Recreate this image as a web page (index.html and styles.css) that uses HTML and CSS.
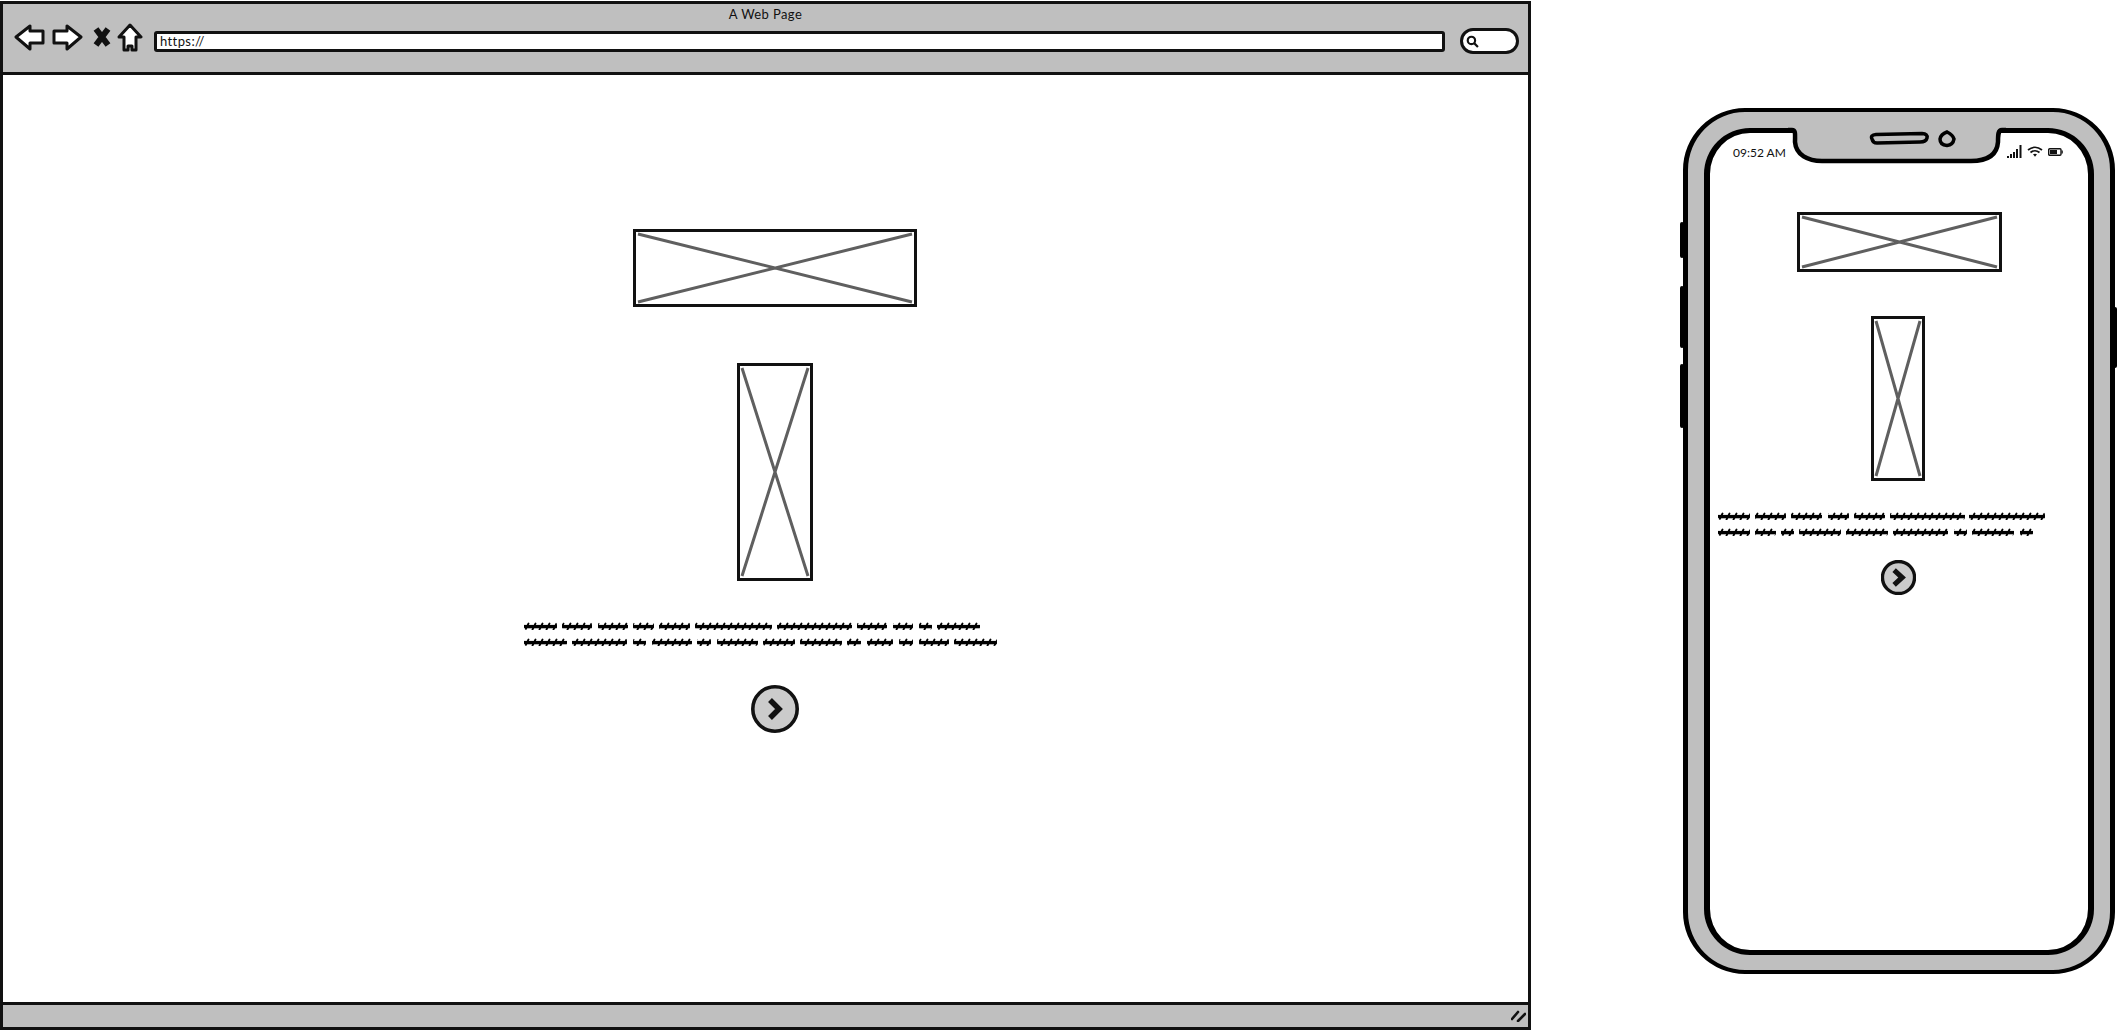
FILE: index.html
```html
<!DOCTYPE html>
<html lang="en">
<head>
    <meta charset="UTF-8">
    <title>A Web Page</title>
    <link rel="stylesheet" href="styles.css">
</head>
<body>

    <div class="browser">
        <header class="topbar">
            <div class="title">A Web Page</div>
            <div class="toolbar">
                <svg class="icon icon-back" viewBox="0 0 31 28"><path d="M2 14 L16 3 V8 H29 V20 H16 V26 Z"/></svg>
                <svg class="icon icon-forward" viewBox="0 0 32 28"><path d="M30 14 L16 3 V8 H3 V20 H16 V26 Z"/></svg>
                <svg class="icon icon-close" viewBox="0 0 20 22"><path d="M4 3 L16 19 M16 3 L4 19"/></svg>
                <svg class="icon icon-home" viewBox="0 0 26 29"><path d="M13 2 L24 14 H19 V27 H15 V23 H11 V27 H7 V14 H2 Z"/></svg>
                <div class="address">https://</div>
                <div class="search">
                    <svg class="search-glass" viewBox="0 0 12 12"><circle cx="5" cy="5" r="3.4"/><path d="M7.5 7.5 L11 11"/></svg>
                </div>
            </div>
        </header>

        <main class="page">
            <div class="placeholder wide">
                <svg viewBox="0 0 278 72"><path d="M2 2 L276 70 M276 2 L2 70"/></svg>
            </div>
            <div class="placeholder tall">
                <svg viewBox="0 0 70 212"><path d="M2 2 L68 210 M68 2 L2 210"/></svg>
            </div>
            <svg class="squiggle squiggle-wide" viewBox="0 0 502 24">
                <defs>
                    <pattern id="scribble" width="7" height="8" patternUnits="userSpaceOnUse">
                        <path class="scribble-line" d="M0 4.6 H7"/>
                        <path class="scribble-tick" d="M1.5 7.5 L4.5 1.5"/>
                    </pattern>
                </defs>
                <g fill="url(#scribble)">
                    <rect x="0" y="0" width="33" height="8" rx="3"/>
                    <rect x="38" y="0" width="30" height="8" rx="3"/>
                    <rect x="74" y="0" width="30" height="8" rx="3"/>
                    <rect x="109" y="0" width="21" height="8" rx="3"/>
                    <rect x="135" y="0" width="31" height="8" rx="3"/>
                    <rect x="171" y="0" width="77" height="8" rx="3"/>
                    <rect x="253" y="0" width="75" height="8" rx="3"/>
                    <rect x="333" y="0" width="30" height="8" rx="3"/>
                    <rect x="369" y="0" width="20" height="8" rx="3"/>
                    <rect x="395" y="0" width="13" height="8" rx="3"/>
                    <rect x="413" y="0" width="43" height="8" rx="3"/>
                    <rect x="0" y="16" width="43" height="8" rx="3"/>
                    <rect x="48" y="16" width="55" height="8" rx="3"/>
                    <rect x="109" y="16" width="13" height="8" rx="3"/>
                    <rect x="128" y="16" width="40" height="8" rx="3"/>
                    <rect x="173" y="16" width="14" height="8" rx="3"/>
                    <rect x="193" y="16" width="41" height="8" rx="3"/>
                    <rect x="239" y="16" width="32" height="8" rx="3"/>
                    <rect x="276" y="16" width="42" height="8" rx="3"/>
                    <rect x="323" y="16" width="14" height="8" rx="3"/>
                    <rect x="343" y="16" width="26" height="8" rx="3"/>
                    <rect x="375" y="16" width="14" height="8" rx="3"/>
                    <rect x="395" y="16" width="30" height="8" rx="3"/>
                    <rect x="430" y="16" width="43" height="8" rx="3"/>
                </g>
            </svg>
            <svg class="next next-wide" viewBox="0 0 48 48">
                <circle cx="24" cy="24" r="22.2"/>
                <path d="M19 15 L28 24 L19 33"/>
            </svg>
        </main>

        <footer class="statusbar">
            <svg class="grip" viewBox="0 0 15 12"><path d="M1 9 L7 2 M7 11 L14 4"/></svg>
        </footer>
    </div>

    <div class="phone">
        <span class="side-btn side-a"></span>
        <span class="side-btn side-b"></span>
        <span class="side-btn side-c"></span>
        <span class="side-btn side-d"></span>

        <div class="screen">
            <div class="statusrow">
                <span class="time">09:52 AM</span>
                <div class="status-icons">
                    <svg class="signal" viewBox="0 0 15 13">
                        <rect x="0" y="11" width="2" height="2"/>
                        <rect x="3" y="9" width="2" height="4"/>
                        <rect x="6" y="7" width="2" height="6"/>
                        <rect x="9" y="4" width="2" height="9"/>
                        <rect x="12.5" y="0" width="2" height="13"/>
                    </svg>
                    <svg class="wifi" viewBox="0 0 16 11">
                        <path d="M1 4 Q8 -1.5 15 4 M3.5 6.5 Q8 3 12.5 6.5"/>
                        <path class="wifi-dot" d="M6 8.3 Q8 7 10 8.3 L8 10.8 Z"/>
                    </svg>
                    <svg class="battery" viewBox="0 0 15 8">
                        <rect class="battery-case" x="0.7" y="0.7" width="12.3" height="6.6" rx="1"/>
                        <rect x="2" y="2" width="7" height="4"/>
                        <path class="battery-cap" d="M14.2 2.5 V5.5"/>
                    </svg>
                </div>
            </div>

            <div class="phone-page">
                <div class="placeholder phone-wide">
                    <svg viewBox="0 0 199 54"><path d="M2 2 L197 52 M197 2 L2 52"/></svg>
                </div>
                <div class="placeholder phone-tall">
                    <svg viewBox="0 0 48 159"><path d="M2 2 L46 157 M46 2 L2 157"/></svg>
                </div>
                <svg class="squiggle squiggle-phone" viewBox="0 0 360 24">
                    <g fill="url(#scribble)">
                        <rect x="0" y="0" width="32" height="8" rx="3"/>
                        <rect x="37" y="0" width="31" height="8" rx="3"/>
                        <rect x="73" y="0" width="31" height="8" rx="3"/>
                        <rect x="110" y="0" width="21" height="8" rx="3"/>
                        <rect x="136" y="0" width="31" height="8" rx="3"/>
                        <rect x="172" y="0" width="75" height="8" rx="3"/>
                        <rect x="251" y="0" width="76" height="8" rx="3"/>
                        <rect x="0" y="16" width="32" height="8" rx="3"/>
                        <rect x="37" y="16" width="21" height="8" rx="3"/>
                        <rect x="63" y="16" width="13" height="8" rx="3"/>
                        <rect x="81" y="16" width="42" height="8" rx="3"/>
                        <rect x="128" y="16" width="42" height="8" rx="3"/>
                        <rect x="175" y="16" width="55" height="8" rx="3"/>
                        <rect x="236" y="16" width="13" height="8" rx="3"/>
                        <rect x="254" y="16" width="42" height="8" rx="3"/>
                        <rect x="302" y="16" width="13" height="8" rx="3"/>
                    </g>
                </svg>
                <svg class="next next-phone" viewBox="0 0 48 48">
                    <circle cx="24" cy="24" r="22"/>
                    <path d="M18 14 L29 24 L18 34"/>
                </svg>
            </div>
        </div>

        <svg class="notch" viewBox="0 0 232 42">
            <path class="notch-fill" d="M8 3 H12 C16 4 15 9 15 16 C16 29 28 35 42 35 H191 C208 35 217 29 218 16 C218 9 218 4 222 3 H226 V-4 H8 Z"/>
            <path class="notch-line" d="M8 4 H12 C16 4 15 9 15 16 C16 29 28 35 42 35 H191 C208 35 217 29 218 16 C218 9 218 4 222 4 H226"/>
            <path class="speaker" d="M92 13 Q90 9 96 8.5 L142 7.5 Q148 8 147 12 Q146 16 140 16 L97 17 Q93 17 92 13 Z"/>
            <path class="camera" d="M167 6 Q173 9 174 13 Q173 19 167 19.5 Q160 19 160 13 Q161 8 167 6 Z"/>
        </svg>
    </div>

</body>
</html>
```

FILE: styles.css
```css
* {
    box-sizing: border-box;
}

html, body {
    margin: 0;
    padding: 0;
    height: 100%;
    overflow: hidden;
    background-color: white;
}

body {
    display: flex;
    align-items: flex-start;
    font-family: Lato, "Liberation Sans", sans-serif;
    color: #111;
}

/* browser window */
.browser {
    display: flex;
    flex-direction: column;
    flex: none;
    width: 1531px;
    height: 1029px;
    margin-top: 1px;
    border: 3px solid #111;
}

.topbar {
    height: 71px;
    flex: none;
    background-color: #bfbfbf;
    border-bottom: 3px solid #111;
}

.title {
    height: 19px;
    padding-top: 3px;
    font-size: 13px;
    line-height: 15px;
    letter-spacing: 0.4px;
    text-align: center;
}

.toolbar {
    display: flex;
    align-items: center;
    height: 36px;
    padding-left: 11px;
}

.icon {
    flex: none;
    margin-bottom: 8px;
}

.icon path {
    fill: white;
    stroke: #111;
    stroke-width: 3;
    stroke-linejoin: round;
}

.icon-back {
    width: 31px;
    height: 28px;
}

.icon-forward {
    width: 32px;
    height: 28px;
    margin-left: 6px;
}

.icon-close {
    width: 20px;
    height: 22px;
    margin-left: 9px;
}

.icon-close path {
    fill: none;
    stroke-width: 6;
}

.icon-home {
    width: 26px;
    height: 29px;
    margin-left: 5px;
}

.address {
    flex: none;
    width: 1291px;
    height: 21px;
    margin-left: 11px;
    padding-left: 3px;
    background-color: white;
    border: 3px solid #111;
    border-radius: 3px;
    font-size: 13px;
    line-height: 15px;
    letter-spacing: 0.4px;
}

.search {
    display: flex;
    align-items: center;
    flex: none;
    width: 59px;
    height: 26px;
    margin-left: 15px;
    padding-left: 3px;
    background-color: white;
    border: 3px solid #111;
    border-radius: 13px;
}

.search-glass {
    width: 13px;
    height: 13px;
}

.search-glass circle, .search-glass path {
    fill: none;
    stroke: #111;
    stroke-width: 2;
}

.page {
    display: flex;
    flex-direction: column;
    align-items: center;
    flex: 1;
    padding: 154px 0 0 19px;
}

.statusbar {
    display: flex;
    align-items: center;
    justify-content: flex-end;
    height: 25px;
    flex: none;
    padding-right: 2px;
    background-color: #bfbfbf;
    border-top: 3px solid #111;
}

.grip {
    width: 15px;
    height: 12px;
}

.grip path {
    fill: none;
    stroke: #111;
    stroke-width: 2.6;
    stroke-linecap: round;
}

/* image placeholders */
.placeholder {
    flex: none;
    background-color: white;
    border: 3px solid #111;
}

.placeholder svg {
    display: block;
    width: 100%;
    height: 100%;
}

.placeholder path {
    fill: none;
    stroke: #5f5f5f;
    stroke-width: 3;
}

.wide {
    width: 284px;
    height: 78px;
}

.tall {
    width: 76px;
    height: 218px;
    margin-top: 56px;
}

.phone-wide {
    width: 205px;
    height: 60px;
    margin-left: 2px;
}

.phone-tall {
    width: 54px;
    height: 165px;
    margin-top: 44px;
}

/* scribbled text */
.squiggle {
    display: block;
    flex: none;
}

.squiggle-wide {
    width: 502px;
    height: 24px;
    margin-top: 41px;
}

.squiggle-phone {
    width: 360px;
    height: 24px;
    margin-top: 31px;
}

.scribble-line {
    fill: none;
    stroke: #000;
    stroke-width: 3.4;
}

.scribble-tick {
    fill: none;
    stroke: #000;
    stroke-width: 1.8;
    stroke-linecap: round;
}

.next {
    display: block;
    flex: none;
}

.next circle {
    fill: #cbcbcb;
    stroke: #111;
    stroke-width: 3.6;
}

.next path {
    fill: none;
    stroke: #111;
    stroke-width: 5.5;
}

.next-wide {
    width: 48px;
    height: 48px;
    margin-top: 39px;
}

.next-phone {
    width: 35px;
    height: 35px;
    margin-top: 24px;
}

.next-phone circle {
    stroke-width: 4.6;
}

.next-phone path {
    stroke-width: 7;
}

/* phone mockup */
.phone {
    position: relative;
    flex: none;
    width: 432px;
    height: 866px;
    margin: 108px 0 0 152px;
    padding: 16px 16px 15px;
    background-color: #bfbfbf;
    border: solid #000;
    border-width: 4px 5px;
    border-radius: 62px;
}

.side-btn {
    position: absolute;
    width: 4px;
    background-color: #000;
    border-radius: 2px;
}

.side-a {
    left: -8px;
    top: 110px;
    height: 36px;
}

.side-b {
    left: -8px;
    top: 174px;
    height: 62px;
}

.side-c {
    left: -8px;
    top: 252px;
    height: 64px;
}

.side-d {
    right: -7px;
    top: 195px;
    height: 61px;
}

.screen {
    height: 100%;
    background-color: white;
    border: solid #000;
    border-width: 5px 6px;
    border-radius: 46px;
}

.statusrow {
    display: flex;
    align-items: flex-start;
    justify-content: space-between;
    height: 79px;
    padding: 12px 25px 0 23px;
}

.time {
    font-size: 12px;
    line-height: 16px;
}

.status-icons {
    display: flex;
    align-items: center;
    gap: 5px;
}

.signal {
    width: 15px;
    height: 13px;
}

.signal rect {
    fill: #111;
}

.wifi {
    width: 16px;
    height: 11px;
}

.wifi path {
    fill: none;
    stroke: #111;
    stroke-width: 1.7;
}

.wifi .wifi-dot {
    fill: #111;
    stroke: none;
}

.battery {
    width: 15px;
    height: 8px;
}

.battery rect {
    fill: #111;
}

.battery .battery-case {
    fill: white;
    stroke: #111;
    stroke-width: 1.4;
}

.battery-cap {
    fill: none;
    stroke: #111;
    stroke-width: 1.2;
}

.phone-page {
    display: flex;
    flex-direction: column;
    align-items: center;
    padding-right: 2px;
}

.notch {
    position: absolute;
    left: 92px;
    top: 14px;
    width: 232px;
    height: 42px;
    overflow: visible;
}

.notch-fill {
    fill: #bfbfbf;
}

.notch-line {
    fill: none;
    stroke: #000;
    stroke-width: 4.5;
}

.speaker, .camera {
    fill: #bfbfbf;
    stroke: #000;
    stroke-width: 3.5;
}
```
